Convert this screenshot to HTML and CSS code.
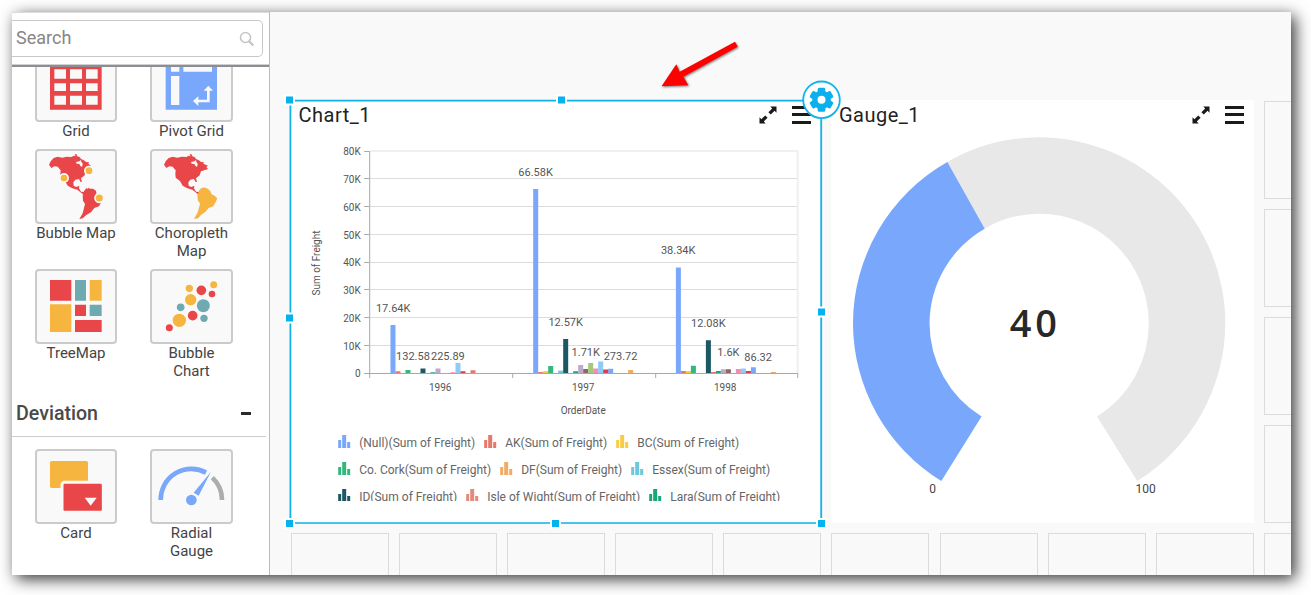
FILE: index.html
```html
<!DOCTYPE html>
<html lang="en">
<head>
<meta charset="utf-8">
<title>Dashboard Designer</title>
<link rel="stylesheet" href="styles.css">
</head>
<body>
<div class="app">
  <aside class="sidebar">
    <div class="search-bar">
      <div class="search-box">
        <span>Search</span>
        <svg class="search-icon" width="16" height="16" viewBox="0 0 16 16"><circle cx="6.5" cy="6.5" r="5" /><path d="M10 10.2l4.300 4.300"/></svg>
      </div>
    </div>
    <div class="palette">
      <div class="tiles scrolled">
        <div class="item">
          <div class="tile"><svg viewBox="105 141 246 225">
            <path fill="#e94649" fill-rule="evenodd" d="M150 174h155v155H150zM163 208h35v28h-35zM210 208h36v28h-36zM258 208h35v28h-35zM163 250h35v23h-35zM210 250h36v23h-36zM258 250h35v23h-35zM163 287h35v27h-35zM210 287h36v27h-36zM258 287h35v27h-35z"/></svg></div>
          <div class="label">Grid</div>
        </div>
        <div class="item">
          <div class="tile"><svg viewBox="450 141 249 225">
            <path fill="#78a7fb" d="M497 174h154v155H497z"/>
            <path fill="#f9f9f9" d="M513 186h25v29h-25zM550 186h86v29h-86zM513 228h25v87h-25z"/>
            <path fill="#f9f9f9" d="M625 257l14 15h-10v35h-34v11l-16-15 16-14v10h26v-27h-10z"/></svg></div>
          <div class="label">Pivot Grid</div>
        </div>
        <div class="item">
          <div class="tile"><svg viewBox="105 447 246 225">
            <path fill="#e94649" d="M147 494l5-10 9-10 12-4 14 3 13-3 14 1 8-4 5 2-3-6 5-1 3 7 8 3 4 7-6 5-10 2 2 5 8 1 5 8 4-1 1-8-5-7 1-7 10 5 4 4 9 1-2 4 9 8-10 8-8 9-2 10-11 9 3 11-5-1-4-8-11 2-6 8 1 10 8 4 9-4-1 8 6 10 9 1 4 4-7 3-17-14-15-4-14-8-8-14-13-10-1-12 1-10-9-11-10-1-9 5z"/>
            <path fill="#e94649" d="M252 573l7-8 5 1 2-3 4 3h9l9 6 2 13 9 5 9 6-4 10-7 13-14 5-10 13-14 8-11 10-10 2 10-17 7-28-6-10-1-15z"/>
            <g fill="#f6b53f" stroke="#f9f9f9" stroke-width="5"><circle cx="192" cy="534" r="12.500"/><circle cx="267" cy="512" r="12.500"/><circle cx="298" cy="594" r="13"/></g></svg></div>
          <div class="label">Bubble Map</div>
        </div>
        <div class="item">
          <div class="tile"><svg viewBox="450 447 249 225">
            <path fill="#e94649" d="M492 494l5-10 9-10 12-4 14 3 13-3 14 1 8-4 5 2-3-6 5-1 3 7 8 3 4 7-6 5-10 2 2 5 8 1 5 8 4-1 1-8-5-7 1-7 10 5 4 4 9 1-2 4 14 6-5 4 5 6-11 4-10 3-4 12-11 9 3 11-5-1-4-8-11 2-6 8 1 10 8 4 9-4-1 8 6 10 9 1 4 4-7 3-17-14-15-4-14-8-8-14-13-10-1-12 1-10-9-11-10-1-9 5z"/>
            <path fill="#f6b53f" stroke="#e88a45" stroke-width=".8" d="M597 573l7-8 5-1 4-1 9 3 8 7 4 10 10 5 7 7-4 10-8 14-13 4-10 12-13 9-9 10-11 2 10-17 8-28-7-10-1-15z"/></svg></div>
          <div class="label">Choropleth<br>Map</div>
        </div>
        <div class="item">
          <div class="tile"><svg viewBox="105 42 246 225">
            <path fill="#e94649" d="M150 75h64v62h-64zM225 149h33v34h-33zM225 195h80v36h-80z"/>
            <path fill="#6faab0" d="M225 75h33v62h-33zM269 149h36v34h-36z"/>
            <path fill="#f6b53f" d="M269 75h36v62h-36zM150 148h64v83h-64z"/></svg></div>
          <div class="label">TreeMap</div>
        </div>
        <div class="item">
          <div class="tile"><svg viewBox="450 42 249 225">
            <g fill="#f6b53f"><circle cx="568" cy="100" r="11"/><circle cx="641" cy="89" r="10.500"/><circle cx="572" cy="134" r="17"/><circle cx="538" cy="196" r="20"/></g>
            <g fill="#e94649"><circle cx="604" cy="106" r="14.500"/><circle cx="636" cy="117" r="10"/><circle cx="578" cy="182" r="14.500"/><circle cx="508" cy="218" r="10.500"/></g>
            <g fill="#6faab0"><circle cx="542" cy="157" r="11.500"/><circle cx="610" cy="152" r="19.500"/><circle cx="612" cy="190" r="11"/></g></svg></div>
          <div class="label">Bubble<br>Chart</div>
        </div>
      </div>
      <div class="section"><span>Deviation</span><i class="minus"></i></div>
      <div class="tiles">
        <div class="item">
          <div class="tile"><svg viewBox="105 72 246 225">
            <rect x="150" y="108" width="114" height="81" rx="5" fill="#f6b53f"/>
            <rect x="186" y="172" width="124" height="90" rx="8" fill="#e94649" stroke="#f9f9f9" stroke-width="9"/>
            <path fill="#f9f9f9" d="M254 218h36l-18 24z"/></svg></div>
          <div class="label">Card</div>
        </div>
        <div class="item">
          <div class="tile"><svg viewBox="450 72 249 225">
            <path fill="none" stroke="#78a7fb" stroke-width="14" d="M482 225a92 92 0 0 1 136-82"/>
            <path fill="none" stroke="#adadad" stroke-width="14" d="M637 158a92 92 0 0 1 29 67"/>
            <circle cx="574" cy="225" r="16" fill="#78a7fb"/>
            <path fill="#78a7fb" d="M633 140l-37 72-15-9z"/></svg></div>
          <div class="label">Radial<br>Gauge</div>
        </div>
      </div>
    </div>
  </aside>

  <main class="canvas">
    <div class="grid">
      <section class="widget chart">
        <header class="widget-head">
          <h2>Chart_1</h2>
          <svg class="expand" viewBox="0 0 18 18"><path d="M11.300.5h6.200v6.200l-1.900-1.900-3.800 3.800-2.400-2.400 3.800-3.800zM.5 11.300v6.200h6.200l-1.900-1.900 3.800-3.800-2.400-2.400-3.800 3.800z"/></svg>
          <i class="menu"></i>
        </header>
        <svg class="body" viewBox="291 131 530 392">
          <g class="gridlines">
            <path d="M370 178.500H797M370 206.500H797M370 234.500H797M370 262.500H797M370 289.500H797M370 317.500H797M370 345.500H797"/>
            <path class="frame" d="M370 151H797.500V373"/>
          </g>
          <g class="bars">
            <path fill="#78a7fb" d="M390.300 325h5v48h-5zM533 189h5v184h-5zM675.700 267.500h5v105.500h-5zM608 368.700h5v4.300h-5zM750.700 367.300h5v5.700h-5z"/>
            <path fill="#e8776c" d="M395.300 371.300h5v1.700h-5zM470.300 370.300h5v2.700h-5zM538 372h5v1h-5zM680.700 371h5v2h-5zM710.700 372h5v1h-5z"/>
            <path fill="#fbcb42" d="M543 371h5v2h-5zM685.700 371h5v2h-5z"/>
            <path fill="#35b77c" d="M405.300 370h5v3h-5zM548 366h5v7h-5zM690.700 365.800h5v7.200h-5z"/>
            <path fill="#6dc8dc" d="M558 370.600h5v2.400h-5z"/>
            <path fill="#1c5863" d="M420.300 368.600h5v4.400h-5zM563 339h5v34h-5zM705.700 340.300h5v32.700h-5z"/>
            <path fill="#1ba67a" d="M430.300 372.300h5v.7h-5zM573 371.300h5v1.700h-5zM715.700 371h5v2h-5z"/>
            <path fill="#c0a8cb" d="M435.300 368.500h5v4.500h-5zM578 365h5v8h-5zM720.700 369.300h5v3.700h-5z"/>
            <path fill="#8b6b61" d="M583 369h5v4h-5zM725.700 369.300h5v3.700h-5z"/>
            <path fill="#a3c97a" d="M588 363h5v10h-5z"/>
            <path fill="#f48cb4" d="M450.300 372.300h5v.7h-5zM593 368.400h5v4.600h-5zM735.700 369h5v4h-5z"/>
            <path fill="#8fcaf9" d="M455.300 363h5v10h-5zM598 361.500h5v11.500h-5zM740.700 368.600h5v4.400h-5z"/>
            <path fill="#d23f52" d="M460.300 371.300h5v1.700h-5zM603 369.600h5v3.400h-5zM745.700 371h5v2h-5z"/>
            <path fill="#f2ab62" d="M628 370h5v3h-5zM770.700 372h5v1h-5z"/>
          </g>
          <path class="axis" d="M369.500 151V378M364 373.500H797.500M512.500 373v5M655.500 373v5M797.500 373v5M364 151.500h5M364 178.500h5M364 206.500h5M364 234.500h5M364 262.500h5M364 289.500h5M364 317.500h5M364 345.500h5"/>
          <g class="t10 end">
            <text x="360.500" y="155">80K</text><text x="360.500" y="183">70K</text><text x="360.500" y="211">60K</text><text x="360.500" y="239">50K</text><text x="360.500" y="266">40K</text><text x="360.500" y="294">30K</text><text x="360.500" y="322">20K</text><text x="360.500" y="350">10K</text><text x="360.500" y="377">0</text>
          </g>
          <g class="t10 mid">
            <text x="440" y="391">1996</text><text x="583" y="391">1997</text><text x="725" y="391">1998</text>
            <text x="583" y="414" textLength="45">OrderDate</text>
            <text transform="translate(320 263) rotate(-90)" textLength="65">Sum of Freight</text>
          </g>
          <g class="t11 mid">
            <text x="393" y="312">17.64K</text><text x="412.800" y="360">132.58</text><text x="447.700" y="360">225.89</text>
            <text x="535.400" y="176">66.58K</text><text x="565.500" y="326">12.57K</text><text x="585.600" y="356">1.71K</text><text x="620.400" y="360">273.72</text>
            <text x="678" y="254">38.34K</text><text x="708.200" y="327">12.08K</text><text x="728.200" y="356">1.6K</text><text x="758" y="361">86.32</text>
          </g>
          <defs>
            <path id="mark" d="M0 5h3v8H0zM4 0h4v13H4zM9 7h3v6H9z"/>
            <clipPath id="legend-clip"><path d="M291 425h530v76H291z"/></clipPath>
          </defs>
          <g class="legend" clip-path="url(#legend-clip)">
            <use href="#mark" x="338" y="435" fill="#78a7fb"/><text x="359" y="447" textLength="116">(Null)(Sum of Freight)</text>
            <use href="#mark" x="484" y="435" fill="#e8776c"/><text x="505" y="447" textLength="102">AK(Sum of Freight)</text>
            <use href="#mark" x="616" y="435" fill="#fbcb42"/><text x="637" y="447" textLength="102">BC(Sum of Freight)</text>
            <use href="#mark" x="338" y="462" fill="#35b77c"/><text x="359" y="474" textLength="132">Co. Cork(Sum of Freight)</text>
            <use href="#mark" x="500" y="462" fill="#f2ab62"/><text x="521" y="474" textLength="101">DF(Sum of Freight)</text>
            <use href="#mark" x="631" y="462" fill="#6dc8dc"/><text x="652" y="474" textLength="118">Essex(Sum of Freight)</text>
            <use href="#mark" x="338" y="489" fill="#1c5863"/><text x="359" y="501" textLength="98">ID(Sum of Freight)</text>
            <use href="#mark" x="466" y="489" fill="#e48a7c"/><text x="487" y="501" textLength="153">Isle of Wight(Sum of Freight)</text>
            <use href="#mark" x="649" y="489" fill="#1ba67a"/><text x="670" y="501" textLength="110">Lara(Sum of Freight)</text>
          </g>
        </svg>
      </section>

      <section class="widget gauge">
        <header class="widget-head">
          <h2>Gauge_1</h2>
          <svg class="expand" viewBox="0 0 18 18"><path d="M11.300.5h6.200v6.200l-1.900-1.900-3.800 3.800-2.400-2.400 3.800-3.800zM.5 11.300v6.200h6.200l-1.900-1.900 3.800-3.800-2.400-2.400-3.800 3.800z"/></svg>
          <i class="menu"></i>
        </header>
        <svg class="body" viewBox="831 131 423 392">
          <path fill="#e8e8e8" d="M947 161.900A186.500 186.500 0 0 1 1039.500 137A186.500 186.500 0 0 1 1226 323.500A186.500 186.500 0 0 1 1137.700 481.300L1097.500 416.600A110 110 0 0 0 1149.300 323.500A110 110 0 0 0 1039.500 213.500A110 110 0 0 0 984.800 228.500z"/>
          <path fill="#78a7fb" d="M941.500 481.300A186.500 186.500 0 0 1 853 323.500A186.500 186.500 0 0 1 947.500 161.800L985 228.500A110 110 0 0 0 929.700 323.500A110 110 0 0 0 981.800 416.600z"/>
          <text class="gauge-value" x="1010" y="337">40</text>
          <text class="gauge-tick" x="929.300" y="493">0</text>
          <text class="gauge-tick" x="1136" y="493">100</text>
        </svg>
      </section>

      <i class="cell"></i><i class="cell"></i><i class="cell"></i><i class="cell"></i>
      <i class="cell"></i><i class="cell"></i><i class="cell"></i><i class="cell"></i><i class="cell"></i><i class="cell"></i><i class="cell"></i><i class="cell"></i><i class="cell"></i><i class="cell"></i>
    </div>

    <!-- selection frame, resize handles, settings badge and pointer arrow -->
    <svg class="overlay" viewBox="270 12 1021 563">
      <path fill="none" stroke="#0fb3e8" stroke-width="1.800" d="M290.400 523V100.600H821.200V523"/>
      <path stroke="#4bc3ea" stroke-width="2" d="M290 523H822"/>
      <g fill="#04b2ee" stroke="#fff" stroke-width="2">
        <rect x="285" y="95.500" width="9" height="9"/><rect x="557" y="95.500" width="9" height="9"/>
        <rect x="285" y="313.500" width="9" height="9"/><rect x="817" y="307.500" width="9" height="9"/>
        <rect x="285" y="519" width="9" height="9"/><rect x="551" y="519" width="9" height="9"/><rect x="817" y="519" width="9" height="9"/>
      </g>
      <circle cx="821.500" cy="99.800" r="18.300" fill="#fff" stroke="#12b4e9" stroke-width="1.800"/>
      <g fill="#0bb0ec" transform="translate(821.500 99.800)">
        <circle r="9.300"/>
        <rect x="-3.800" y="-12" width="7.600" height="24" rx="1.500"/><rect x="-3.800" y="-12" width="7.600" height="24" rx="1.500" transform="rotate(60)"/><rect x="-3.800" y="-12" width="7.600" height="24" rx="1.500" transform="rotate(120)"/>
        <circle r="4" fill="#fff"/>
      </g>
      <path class="pointer" d="M661.500 86.200L676.300 64.300 679.700 71.800 735 41.800 737.700 46.700 683.400 76.700 688.300 85.200z"/>
    </svg>
  </main>
</div>
</body>
</html>
```
FILE: styles.css
```css
* { box-sizing: border-box; }
body {
  height: 595px;
  margin: 0;
  padding: 12px;
  background: #fff;
  font-family: Roboto, "Liberation Sans", sans-serif;
  overflow: hidden;
}
.app {
  display: flex;
  width: 1279px;
  height: 563px;
  background: #fff;
  box-shadow: 4px 4px 15px rgba(0, 0, 0, .8);
}

/* Sidebar */
.sidebar {
  display: flex;
  flex-direction: column;
  width: 258px;
  border-right: 1px solid #bbb;
}
.search-bar {
  flex: none;
  height: 55px;
  padding-top: 7px;
  border-top: 1px solid #dcdcdc;
  border-bottom: 2px solid #8d8e94;
  box-shadow: 0 -1px 0 #d0d0d0 inset;
}
.search-box {
  display: flex;
  align-items: center;
  justify-content: space-between;
  width: 251px;
  height: 37px;
  padding: 0 7px 2px 4px;
  border: 1px solid #c8c8c8;
  border-left: 0;
  border-radius: 0 5px 5px 0;
  color: #868686;
  font-size: 18px;
}
.search-icon { fill: none; stroke: #c6c6c6; stroke-width: 1.6; margin-top: 2px; }
.search-icon path { stroke-width: 2.4; }
.palette { flex: 1; overflow: hidden; }
.tiles {
  display: grid;
  grid-template-columns: 82px 83px;
  column-gap: 33px;
  row-gap: 9px;
  padding: 13px 0 0 23px;
}
.tiles.scrolled { margin-top: -20px; padding-top: 0; padding-bottom: 9px; }
.tile {
  height: 75px;
  border: 2px solid #cbcbcb;
  border-radius: 4px;
  background: #f9f9f9;
}
.tile svg { display: block; width: calc(100% + 4px); height: 75px; margin: -2px; }
.label {
  color: #444;
  font-size: 15px;
  line-height: 18px;
  text-align: center;
  white-space: nowrap;
}
.section {
  display: flex;
  align-items: center;
  justify-content: space-between;
  width: 254px;
  height: 48px;
  margin-bottom: -1px;
  padding: 1px 15px 0 4px;
  border-bottom: 1px solid #cdcdcd;
  color: #4a4a4a;
  font-size: 19.6px;
  font-weight: 500;
}
.minus { width: 10px; height: 3px; background: #2a2a2a; }

/* Design canvas */
.canvas {
  position: relative;
  flex: 1;
  overflow: hidden;
  background: #f9f9f9;
}
.grid {
  display: grid;
  grid-template-columns: repeat(10, 98px);
  grid-template-rows: repeat(5, 98px);
  gap: 10.1px;
  padding: 89px 0 0 21px;
}
.cell { border: 1px solid #dcdcdc; }
.widget { background: #fff; box-shadow: 0 -1px 0 #fff; }
.chart { grid-area: 1 / 1 / 5 / 6; }
.gauge { grid-area: 1 / 6 / 5 / 10; }
.widget-head {
  display: flex;
  align-items: center;
  height: 30px;
  padding: 0 10px 2px 7.5px;
  color: #222;
}
.widget-head h2 {
  flex: 1;
  margin: 0;
  font-size: 20px;
  font-weight: 400;
  letter-spacing: .5px;
}
.expand { width: 18px; height: 18px; fill: #1a1a1a; }
.menu {
  width: 19px;
  height: 18px;
  margin-left: 15px;
  background: linear-gradient(#1a1a1a 0 3px, transparent 3px 7.5px, #1a1a1a 7.5px 10.5px, transparent 10.5px 15px, #1a1a1a 15px);
}
.body { display: block; width: 100%; height: 392px; }

/* Chart */
.gridlines path { fill: none; stroke: #dcdcdc; }
.gridlines .frame { stroke: #f0f0f0; stroke-width: 2; }
.axis { fill: none; stroke: #a8a8a8; }
.t10 { fill: #555; font-size: 10px; }
.t11 { fill: #555; font-size: 11px; }
.end { text-anchor: end; }
.mid { text-anchor: middle; }
.legend { fill: #666; font-size: 12px; }

/* Gauge */
.gauge-value { fill: #282828; font-family: "Open Sans", sans-serif; font-size: 38px; font-weight: 600; letter-spacing: 4px; }
.gauge-tick { fill: #444; font-size: 12px; }

.overlay { position: absolute; inset: 0; width: 1021px; height: 563px; }
.pointer { fill: #f00; filter: drop-shadow(1px 1px 1px rgba(0, 0, 0, .5)); }
```
